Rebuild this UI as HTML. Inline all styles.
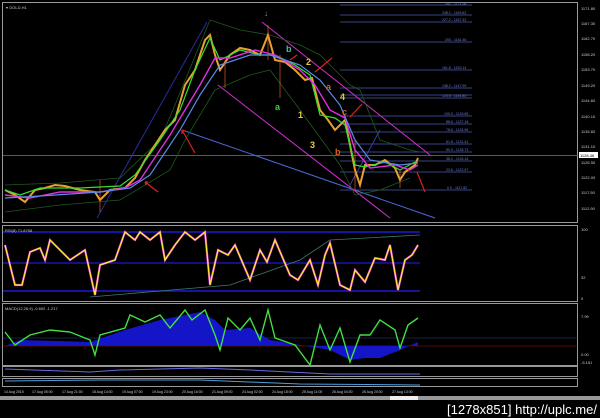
<!DOCTYPE html>
<html><head><meta charset="utf-8"><style>
html,body{margin:0;padding:0;background:#000;width:600px;height:418px;overflow:hidden}
svg{display:block}
text{font-family:"Liberation Sans",sans-serif}
</style></head><body>
<svg width="600" height="418" viewBox="0 0 600 418" xmlns="http://www.w3.org/2000/svg">
<rect width="600" height="418" fill="#000"/>
<g fill="none" stroke="#999" stroke-width="1">
<rect x="2.5" y="2.5" width="575" height="220"/>
<rect x="2.5" y="225.5" width="575" height="76"/>
<rect x="2.5" y="303.5" width="575" height="62"/>
<rect x="2.5" y="366.5" width="575" height="10"/>
<rect x="2.5" y="378.5" width="575" height="8"/>
</g>
<text x="6" y="9" font-size="4" fill="#ccc">▾ GOLD,H1</text>
<line x1="3" y1="155.5" x2="578" y2="155.5" stroke="#777" stroke-width="0.8"/>
<g stroke="#4a5ab0" stroke-width="0.7">
<line x1="340" y1="5" x2="472" y2="5"/><line x1="340" y1="15" x2="472" y2="15"/><line x1="340" y1="22" x2="472" y2="22"/><line x1="340" y1="42" x2="472" y2="42"/><line x1="340" y1="70" x2="472" y2="70"/><line x1="340" y1="88" x2="472" y2="88"/><line x1="340" y1="95" x2="472" y2="95"/><line x1="340" y1="98" x2="472" y2="98"/><line x1="340" y1="116" x2="472" y2="116"/><line x1="340" y1="124" x2="472" y2="124"/><line x1="340" y1="132" x2="472" y2="132"/><line x1="340" y1="144" x2="472" y2="144"/><line x1="340" y1="152" x2="472" y2="152"/><line x1="340" y1="161" x2="472" y2="161"/><line x1="340" y1="172" x2="472" y2="172"/><line x1="340" y1="190" x2="472" y2="190"/>
</g>
<g font-size="3.5" fill="#6f7fd0">
<text x="445" y="5">261 - 1171.98</text><text x="442" y="14">238.2 - 1169.62</text><text x="442" y="21">227.2 - 1167.42</text><text x="445" y="41">200 - 1161.46</text><text x="442" y="69">161.8 - 1153.14</text><text x="442" y="87">138.2 - 1147.99</text><text x="442" y="97">123.6 - 1144.80</text><text x="444" y="115">100.0 - 1139.65</text><text x="446" y="123">88.6 - 1137.16</text><text x="446" y="131">78.6 - 1134.96</text><text x="446" y="143">61.8 - 1131.31</text><text x="446" y="151">50.0 - 1128.73</text><text x="446" y="160">38.2 - 1126.16</text><text x="446" y="171">23.6 - 1122.97</text><text x="447" y="189">0.0 - 1117.82</text>
</g>
<g font-size="4" fill="#ccc">
<text x="581" y="10">1171.80</text><text x="581" y="25">1167.30</text><text x="581" y="40">1162.70</text><text x="581" y="56">1158.20</text><text x="581" y="71">1153.70</text><text x="581" y="87">1149.20</text><text x="581" y="102">1144.60</text><text x="581" y="118">1140.10</text><text x="581" y="133">1135.60</text><text x="581" y="148">1131.10</text><text x="581" y="164">1126.50</text><text x="581" y="179">1122.00</text><text x="581" y="194">1117.50</text><text x="581" y="210">1112.90</text>
</g>
<rect x="579" y="152" width="19" height="6" fill="#fff"/><text x="580" y="157" font-size="4" fill="#000">1128.46</text>
<g fill="none" stroke-width="1">
<line x1="182" y1="130" x2="435" y2="218" stroke="#4a6ad8"/>
<line x1="97" y1="218" x2="207" y2="22" stroke="#2a2aa0"/>
<line x1="262" y1="22" x2="430" y2="155" stroke="#d030d0"/>
<line x1="218" y1="85" x2="390" y2="218" stroke="#d030d0"/>
<line x1="350" y1="185" x2="380" y2="130" stroke="#3a3ab0"/>
</g>
<g fill="none" stroke="#1d5a1d" stroke-width="0.8">
<path d="M5,185 L60,183 L120,178 L160,140 L175,105 L210,20 L240,30 L270,35 L300,45 L320,55 L350,85 L360,90 L380,140 L410,150 L420,152"/>
<path d="M5,212 L60,205 L120,200 L170,170 L185,140 L215,90 L250,75 L270,70 L300,110 L340,165 L355,195 L380,190 L410,178"/>
</g>
<path fill="none" stroke="#e8a030" stroke-width="2" d="M5,190 L15,195 L25,202 L35,190 L45,188 L55,185 L65,186 L80,190 L95,192 L100,200 L110,190 L125,188 L135,178 L145,160 L155,145 L165,130 L175,120 L185,85 L195,70 L205,40 L210,35 L215,55 L220,70 L230,55 L240,48 L250,50 L260,55 L268,35 L275,60 L285,62 L295,70 L305,80 L312,78 L320,110 L328,120 L335,130 L345,120 L355,170 L360,185 L365,165 L375,165 L385,160 L395,168 L400,180 L405,172 L415,165 L418,158"/>
<path fill="none" stroke="#ff6a2a" stroke-width="0.6" d="M100,180 L100,212 M268,25 L268,60 M280,55 L280,98 M355,140 L355,190 M400,170 L400,188 M225,60 L225,88"/>
<path fill="none" stroke="#30e030" stroke-width="1.2" d="M5,190 L20,195 L40,188 L80,188 L120,186 L135,175 L160,140 L180,110 L195,70 L210,38 L220,60 L240,50 L260,55 L275,55 L295,65 L310,75 L320,115 L335,118 L345,125 L355,165 L365,167 L385,162 L400,170 L415,162"/>
<path fill="none" stroke="#e030e0" stroke-width="1.4" d="M5,195 L30,198 L60,192 L100,192 L125,188 L140,180 L170,135 L200,85 L215,58 L230,58 L255,50 L275,55 L300,70 L315,85 L330,110 L345,118 L355,150 L370,168 L395,165 L410,170 L418,165"/>
<path fill="none" stroke="#5a8ae8" stroke-width="1.2" d="M5,198 L40,196 L100,192 L130,188 L150,175 L180,130 L200,95 L220,65 L250,55 L270,55 L300,65 L320,80 L340,105 L355,140 L370,160 L400,165 L418,163"/>
<g stroke="#e02020" stroke-width="1.2" fill="none">
<path d="M145,182 L158,192 M145,182 l3,0 M145,182 l1,3"/>
<path d="M182,130 L195,153 M182,130 l0,4 M182,130 l3,1"/>
<path d="M290,60 L297,55 M332,58 L315,72"/>
<path d="M362,104 L350,117"/>
<path d="M417,172 L425,192"/>
</g>
<g font-size="9" font-weight="bold">
<text x="275" y="110" fill="#40d040">a</text>
<text x="286" y="52" fill="#40c0a0">b</text>
<text x="306" y="65" fill="#e0d040">2</text>
<text x="298" y="118" fill="#e0d040">1</text>
<text x="310" y="148" fill="#e0d040">3</text>
<text x="340" y="100" fill="#e0d040">4</text>
<text x="326" y="90" fill="#e06020">a</text>
<text x="335" y="155" fill="#e06020">b</text>
<text x="342" y="115" fill="#e06020">c</text>
</g>
<text x="264" y="16" font-size="8" fill="#5aa0e0">↓</text>
<g fill="none">
<line x1="3" y1="232" x2="420" y2="232" stroke="#1a1ad0" stroke-width="1.5"/>
<line x1="3" y1="263" x2="420" y2="263" stroke="#1a1ad0" stroke-width="1.2"/>
<line x1="3" y1="291" x2="420" y2="291" stroke="#1a1ad0" stroke-width="1.5"/>
<path d="M90,297 L230,285 L300,260 L330,240 L420,235" stroke="#3a7a6a" stroke-width="0.8"/>
<path stroke="#e030e0" stroke-width="2.2" d="M5,245 L15,285 L22,285 L30,252 L40,248 L45,260 L50,240 L60,250 L70,260 L85,250 L95,295 L100,265 L115,260 L125,232 L135,240 L140,232 L150,240 L160,232 L165,260 L175,245 L185,232 L195,240 L205,232 L210,285 L218,250 L228,255 L235,245 L250,280 L260,250 L267,262 L275,240 L290,275 L298,280 L310,260 L318,285 L325,255 L330,243 L340,285 L350,290 L355,270 L365,282 L375,258 L385,260 L390,245 L398,290 L405,260 L412,255 L418,245"/>
<path stroke="#f8f030" stroke-width="1.2" d="M5,245 L15,285 L22,285 L30,252 L40,248 L45,260 L50,240 L60,250 L70,260 L85,250 L95,295 L100,265 L115,260 L125,232 L135,240 L140,232 L150,240 L160,232 L165,260 L175,245 L185,232 L195,240 L205,232 L210,285 L218,250 L228,255 L235,245 L250,280 L260,250 L267,262 L275,240 L290,275 L298,280 L310,260 L318,285 L325,255 L330,243 L340,285 L350,290 L355,270 L365,282 L375,258 L385,260 L390,245 L398,290 L405,260 L412,255 L418,245"/>
</g>
<text x="5" y="232" font-size="4" fill="#ccc">RSI(8) 71.8758</text>
<g font-size="4" fill="#ccc"><text x="581" y="231">100</text><text x="581" y="279">32</text><text x="581" y="300">0</text><text x="5" y="310">MACD(12,26,9) -0.692 -1.217</text><text x="581" y="318">7.99</text><text x="581" y="356">0.00</text><text x="581" y="364">-5.151</text></g>
<line x1="3" y1="346" x2="578" y2="346" stroke="#a01010" stroke-width="0.6"/>
<line x1="3" y1="338" x2="578" y2="338" stroke="#304080" stroke-width="0.6"/>
<path fill="#1515c8" d="M5,346 L20,340 L90,342 L125,330 L160,320 L200,312 L215,320 L225,330 L250,328 L270,340 L300,345 L330,350 L350,360 L365,358 L380,358 L400,350 L418,342 L418,346 Z"/>
<path fill="none" stroke="#40e040" stroke-width="1.4" d="M5,332 L15,345 L30,335 L50,330 L70,332 L90,340 L95,355 L100,335 L125,328 L130,315 L145,322 L160,315 L170,328 L185,310 L192,320 L205,310 L215,335 L220,350 L228,318 L240,330 L250,318 L260,340 L268,310 L275,338 L295,345 L310,365 L320,325 L330,350 L340,328 L350,362 L360,335 L370,335 L380,320 L395,330 L400,348 L408,325 L418,318"/>
<path fill="none" stroke="#6a6ae0" stroke-width="1" d="M5,369 L90,372 L120,370 L200,368 L250,370 L330,374 L420,374"/>
<path fill="none" stroke="#4aa0e0" stroke-width="1" d="M5,381 L100,380 L200,380 L300,384 L420,385"/>
<g font-size="3.5" fill="#ccc">
<text x="4" y="393">14 Aug 2015</text><text x="32" y="393">17 Aug 05:00</text><text x="62" y="393">17 Aug 21:00</text><text x="92" y="393">18 Aug 14:00</text><text x="122" y="393">19 Aug 07:00</text><text x="152" y="393">19 Aug 23:00</text><text x="182" y="393">20 Aug 16:00</text><text x="212" y="393">21 Aug 09:00</text><text x="242" y="393">24 Aug 02:00</text><text x="272" y="393">24 Aug 18:00</text><text x="302" y="393">25 Aug 11:00</text><text x="332" y="393">26 Aug 04:00</text><text x="362" y="393">26 Aug 20:00</text><text x="392" y="393">27 Aug 13:00</text>
</g>
<rect x="0" y="396" width="600" height="4" fill="#999"/>
<rect x="390" y="396" width="28" height="4" fill="#eee"/>
<text x="447" y="414" font-size="13" fill="#fff" textLength="150" lengthAdjust="spacingAndGlyphs">[1278x851] http://uplc.me/</text>
</svg>
</body></html>
